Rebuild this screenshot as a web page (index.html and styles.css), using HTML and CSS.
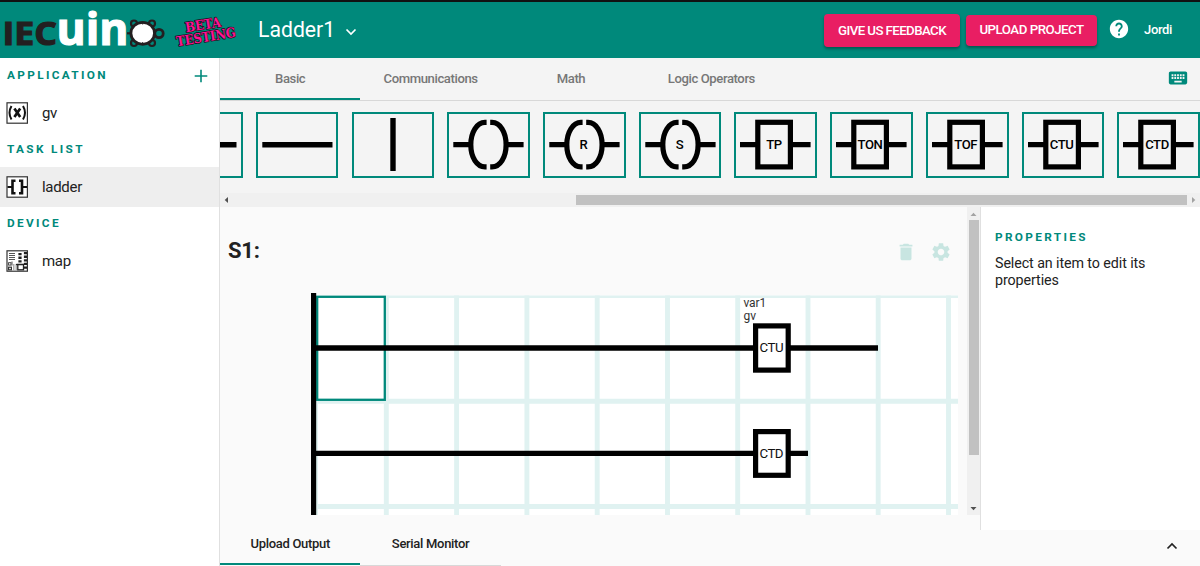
FILE: index.html
```html
<!DOCTYPE html>
<html lang="en">
<head>
    <meta charset="UTF-8">
    <meta name="viewport" content="width=device-width, initial-scale=1.0">
    <title>IECuino</title>
    <link rel="stylesheet" href="styles.css">
</head>
<body>
    <!-- shared ladder symbols -->
    <svg class="defs" width="0" height="0">
        <defs>
            <g id="coil" fill="none" stroke="#000" stroke-width="5.2">
                <path d="M6.3 32.7H23M60 32.7H76.6" />
                <path d="M39.6 10.4H38C30 10.4 23.8 20 23.8 32.7S30 54.900 38 54.900H39.600" />
                <path d="M43.2 10.4H45C53 10.4 59.1 20 59.1 32.7S53 54.900 45 54.900H43.200" />
            </g>
            <g id="block" fill="none" stroke="#000" stroke-width="5.2">
                <path d="M6 32.7H22M58 32.7H76.6" />
                <rect x="23.8" y="10.3" width="32.6" height="44.6" />
            </g>
        </defs>
    </svg>

    <header class="header">
        <svg class="logo" width="240" height="56" viewBox="0 2 240 56">
            <text class="logo-iec" x="2.5" y="45.3" textLength="54.5" lengthAdjust="spacingAndGlyphs">IEC</text>
            <text class="logo-uin" x="56.5" y="45.3" textLength="72" lengthAdjust="spacingAndGlyphs">uin</text>
            <g fill="none" stroke="#231f20" stroke-width="2.2">
                <circle cx="134" cy="23.5" r="3" />
                <circle cx="152" cy="23.5" r="3" />
                <circle cx="134" cy="43" r="3" />
                <circle cx="152" cy="43" r="3" />
                <circle cx="159" cy="33.5" r="4.2" stroke-width="2.8" />
                <path d="M127 33.3h4" />
                <ellipse cx="142.7" cy="33.3" rx="11.8" ry="11" fill="#fff" stroke-width="2.8" />
                <path d="M142.7 22v2.5M142.7 42v2.5" stroke-width="1" />
            </g>
            <g class="beta" transform="rotate(-9 206 31)">
                <text x="186" y="29" textLength="36" lengthAdjust="spacingAndGlyphs">BETA</text>
                <text x="175" y="41.5" textLength="60" lengthAdjust="spacingAndGlyphs">TESTING</text>
            </g>
        </svg>
        <div class="project">
            <span>Ladder1</span>
            <svg width="12" height="8" viewBox="0 0 12 8"><path d="M1.5 1.5L6 6l4.5-4.5" fill="none" stroke="#fff" stroke-width="1.7" /></svg>
        </div>
        <div class="actions">
            <button class="btn btn-feedback">GIVE US FEEDBACK</button>
            <button class="btn btn-upload">UPLOAD PROJECT</button>
            <svg class="help" width="22" height="22" viewBox="0 0 24 24"><path fill="#fff" d="M12 2C6.480 2 2 6.480 2 12s4.480 10 10 10 10-4.480 10-10S17.520 2 12 2zm1 17h-2v-2h2v2zm2.070-7.750l-.9.920C13.450 12.900 13 13.500 13 15h-2v-.5c0-1.100.45-2.100 1.170-2.830l1.240-1.260c.37-.36.59-.86.59-1.410 0-1.100-.9-2-2-2s-2 .9-2 2H8c0-2.210 1.790-4 4-4s4 1.790 4 4c0 .88-.36 1.680-.93 2.250z" /></svg>
            <span class="user">Jordi</span>
        </div>
    </header>

    <div class="page">
        <nav class="sidebar">
            <div class="side-title first">APPLICATION
                <svg class="plus" width="14" height="14" viewBox="0 0 14 14"><path d="M7 .7v12.6M.7 7h12.6" stroke="#00897b" stroke-width="1.6" /></svg>
            </div>
            <div class="side-item">
                <svg width="22" height="22" viewBox="0 0 22 22">
                    <rect x="1" y=".8" width="20.4" height="20.4" fill="#fff" stroke="#333" stroke-width="1.2" />
                    <path d="M5.500 4Q1.500 10.800 5.500 17.500M17 4Q21 10.800 17 17.500" fill="none" stroke="#111" stroke-width="2" />
                    <path d="M8.400 6.500l5.800 8.500M14.200 6.500L8.400 15" stroke="#111" stroke-width="2.7" />
                </svg>
                <span>gv</span>
            </div>
            <div class="side-title">TASK LIST</div>
            <div class="side-item selected">
                <svg width="22" height="22" viewBox="0 0 22 22">
                    <rect x="1" y=".8" width="20.4" height="20.4" fill="#fff" stroke="#333" stroke-width="1.2" />
                    <path d="M9.500 4.800H6.500V17.200H9.500M13 4.800H16V17.200H13" fill="none" stroke="#111" stroke-width="2.6" />
                    <path d="M1.500 11h5M16 11h5" stroke="#111" stroke-width="2.2" />
                </svg>
                <span>ladder</span>
            </div>
            <div class="side-title">DEVICE</div>
            <div class="side-item">
                <svg width="22" height="22" viewBox="0 0 22 22">
                    <rect x="1" y=".8" width="20.4" height="20.4" fill="#fff" stroke="#333" stroke-width="1.2" />
                    <path d="M3 3.500h6M3 5.500h6M3 7.500h6M3 9.500h6" stroke="#555" />
                    <path d="M14 3v10M19.500 2v18" stroke="#222" stroke-width="3.200" stroke-dasharray="2.300 1.300" />
                    <path d="M7.500 14v6M9 14v6M10.500 14v6" stroke="#999" stroke-width=".8" />
                    <rect x="11.8" y="14.5" width="5.7" height="5.3" fill="#fff" stroke="#222" stroke-width="1.3" />
                    <path d="M10 14.500h8" stroke="#222" stroke-width="1.3" />
                    <rect x="2.6" y="12.7" width="2.4" height="2.4" fill="none" stroke="#333" stroke-width=".9" />
                    <rect x="2.6" y="17.2" width="2.8" height="2.6" fill="none" stroke="#333" stroke-width="1.2" />
                    <path d="M6 11.500v4" stroke="#555" />
                </svg>
                <span>map</span>
            </div>
        </nav>

        <main class="content">
            <div class="tabs">
                <div class="tab active">Basic</div>
                <div class="tab">Communications</div>
                <div class="tab">Math</div>
                <div class="tab">Logic Operators</div>
                <svg class="keyboard" width="22" height="22" viewBox="0 0 24 24"><path fill="#00897b" d="M20 5H4c-1.100 0-1.990.9-1.990 2L2 17c0 1.100.9 2 2 2h16c1.100 0 2-.9 2-2V7c0-1.100-.9-2-2-2zm-9 3h2v2h-2V8zm0 3h2v2h-2v-2zM8 8h2v2H8V8zm0 3h2v2H8v-2zm-1 2H5v-2h2v2zm0-3H5V8h2v2zm9 7H8v-2h8v2zm0-4h-2v-2h2v2zm0-3h-2V8h2v2zm3 3h-2v-2h2v2zm0-3h-2V8h2v2z" /></svg>
            </div>

            <div class="palette">
                <div class="tool"><svg viewBox="0 0 82.6 65.4"><path d="M6.3 32.7H76.5" stroke="#000" stroke-width="5.4" /></svg></div>
                <div class="tool"><svg viewBox="0 0 82.6 65.4"><path d="M6.3 32.7H76.5" stroke="#000" stroke-width="5.4" /></svg></div>
                <div class="tool"><svg viewBox="0 0 82.6 65.4"><path d="M41 6V59" stroke="#000" stroke-width="5.4" /></svg></div>
                <div class="tool"><svg viewBox="0 0 82.6 65.4"><use href="#coil" /></svg></div>
                <div class="tool"><svg viewBox="0 0 82.6 65.4"><use href="#coil" /><text x="40.4" y="37.2">R</text></svg></div>
                <div class="tool"><svg viewBox="0 0 82.6 65.4"><use href="#coil" /><text x="40.4" y="37.2">S</text></svg></div>
                <div class="tool"><svg viewBox="0 0 82.6 65.4"><use href="#block" /><text x="40" y="37.2">TP</text></svg></div>
                <div class="tool"><svg viewBox="0 0 82.6 65.4"><use href="#block" /><text x="40" y="37.2">TON</text></svg></div>
                <div class="tool"><svg viewBox="0 0 82.6 65.4"><use href="#block" /><text x="39.7" y="37.2">TOF</text></svg></div>
                <div class="tool"><svg viewBox="0 0 82.6 65.4"><use href="#block" /><text x="39.7" y="37.2">CTU</text></svg></div>
                <div class="tool"><svg viewBox="0 0 82.6 65.4"><use href="#block" /><text x="40" y="37.2">CTD</text></svg></div>
            </div>
            <div class="hscroll">
                <svg width="14" height="14" viewBox="0 0 14 14"><path d="M8 4v6L4.7 7z" fill="#505050" /></svg>
                <div class="hthumb"></div>
                <svg width="13" height="14" viewBox="0 0 13 14"><path d="M5 4v6l3.3-3z" fill="#a3a3a3" /></svg>
            </div>

            <div class="workspace">
                <section class="editor">
                    <div class="section-head">
                        <h2>S1:</h2>
                        <div class="section-tools">
                            <svg width="22" height="22" viewBox="0 0 24 24"><path d="M6 19c0 1.100.9 2 2 2h8c1.100 0 2-.9 2-2V7H6v12zM19 4h-3.500l-1-1h-5l-1 1H5v2h14V4z" /></svg>
                            <svg width="22" height="22" viewBox="0 0 24 24"><path d="M19.140 12.940c.04-.3.06-.61.06-.94 0-.32-.02-.64-.07-.94l2.030-1.580c.18-.14.23-.41.12-.61l-1.920-3.320c-.12-.22-.37-.29-.59-.22l-2.390.96c-.5-.38-1.030-.7-1.620-.94l-.36-2.540c-.04-.24-.24-.41-.48-.41h-3.840c-.24 0-.43.17-.47.41l-.36 2.540c-.59.24-1.130.57-1.620.94l-2.390-.96c-.22-.08-.47 0-.59.22L2.740 8.870c-.12.21-.08.47.12.61l2.030 1.580c-.05.3-.09.63-.09.94s.02.64.07.94l-2.030 1.580c-.18.14-.23.41-.12.61l1.920 3.320c.12.22.37.29.59.22l2.390-.96c.5.38 1.030.7 1.620.94l.36 2.540c.05.24.24.41.48.41h3.840c.24 0 .44-.17.47-.41l.36-2.540c.59-.24 1.130-.56 1.620-.94l2.390.96c.22.08.47 0 .59-.22l1.920-3.320c.12-.22.07-.47-.12-.61l-2.010-1.580zM12 15.600c-1.980 0-3.600-1.620-3.600-3.600s1.620-3.600 3.600-3.600 3.600 1.620 3.600 3.600-1.620 3.600-3.600 3.600z" /></svg>
                        </div>
                    </div>
                    <svg class="ladder" width="648" height="222" viewBox="310 293 648 222">
                        <rect x="316" y="295.6" width="642" height="219.4" fill="#fff" />
                        <!-- grid -->
                        <g fill="none" stroke="#e0f2f1">
                            <path stroke-width="2.4" d="M316 296.8H958" />
                            <path stroke-width="4.9" d="M316 401.2H958M316 506.5H958" />
                            <path stroke-width="4.9" d="M386.3 295.6V515M456.6 295.6V515M526.9 295.6V515M597.2 295.6V515M667.5 295.6V515M737.7 295.6V515M808 295.6V515M878.2 295.6V515M948.5 295.6V515" />
                            <path stroke-width="2" d="M317 402V515" />
                        </g>
                        <rect x="317.2" y="296.8" width="67.6" height="103" fill="none" stroke="#00897b" stroke-width="2.3" />
                        <path d="M313.6 293V515" stroke="#000" stroke-width="5.2" />
                        <path d="M316 348H755M789 348H878M316 453.4H755M789 453.4H808" stroke="#000" stroke-width="5.3" />
                        <rect x="755.6" y="325.9" width="32.6" height="44.2" fill="#fff" stroke="#000" stroke-width="5.2" />
                        <rect x="755.6" y="431.6" width="32.6" height="43.7" fill="#fff" stroke="#000" stroke-width="5.2" />
                        <text class="block-name" x="771.3" y="352.4">CTU</text>
                        <text class="block-name" x="771.3" y="458">CTD</text>
                        <text class="var-name" x="743.5" y="307">var1</text>
                        <text class="var-name" x="743.5" y="320">gv</text>
                    </svg>
                </section>
                <div class="vscroll">
                    <svg width="13" height="13" viewBox="0 0 13 13"><path d="M3.500 9h6L6.500 5.700z" fill="#a3a3a3" /></svg>
                    <div class="vthumb"></div>
                    <svg width="13" height="13" viewBox="0 0 13 13"><path d="M3.500 5h6L6.500 8.300z" fill="#505050" /></svg>
                </div>
                <aside class="properties">
                    <h3>PROPERTIES</h3>
                    <p>Select an item to edit its properties</p>
                </aside>
            </div>

            <div class="console">
                <div class="console-tab active">Upload Output</div>
                <div class="console-tab">Serial Monitor</div>
                <svg class="expand" width="12" height="8" viewBox="0 0 12 8"><path d="M1.500 6.500L6 2l4.500 4.500" fill="none" stroke="#222" stroke-width="1.7" /></svg>
            </div>
        </main>
    </div>
</body>
</html>
```
FILE: styles.css
```css
* {
    box-sizing: border-box;
}

body {
    margin: 0;
    height: 566px;
    overflow: hidden;
    display: flex;
    flex-direction: column;
    font-family: Roboto, sans-serif;
    color: #222;
    background-color: #fafafa;
}

svg {
    display: block;
    flex-shrink: 0;
}

.defs {
    position: absolute;
}

/* Header */
.header {
    height: 58px;
    flex-shrink: 0;
    display: flex;
    align-items: center;
    background-color: #00897b;
    border-top: 2px solid #111;
    color: #fff;
}

.logo {
    overflow: visible;
}

.logo text {
    font-family: "Open Sans", sans-serif;
    font-weight: 700;
}

.logo .logo-iec {
    font-size: 33px;
    fill: #231f20;
    stroke: #231f20;
    stroke-width: 1.2px;
}

.logo .logo-uin {
    font-size: 44.5px;
    fill: #fff;
    stroke: #fff;
    stroke-width: 1.2px;
}

.logo .beta text {
    font-family: "DejaVu Serif", serif;
    font-weight: 700;
    font-size: 13.5px;
    fill: #ff1493;
    stroke: #1d1020;
    stroke-width: 1.6px;
    stroke-linejoin: round;
    paint-order: stroke;
}

.project {
    display: flex;
    align-items: center;
    gap: 10px;
    margin-left: 18px;
    font-size: 21.2px;
}

.project span {
    margin-top: -2px;
}

.project svg {
    margin-top: 4px;
}

.actions {
    display: flex;
    align-items: center;
    margin-left: auto;
    padding-right: 28px;
}

.btn {
    padding: 0;
    border: none;
    border-radius: 4px;
    background-color: #e91e63;
    box-shadow: 0 2px 3px rgba(0, 0, 0, 0.35);
    color: #fff;
    font-family: inherit;
    font-size: 13.3px;
    font-weight: 500;
    letter-spacing: -0.6px;
}

.btn-feedback {
    width: 136px;
    height: 33px;
    margin-right: 6px;
}

.btn-upload {
    width: 131px;
    height: 31px;
    padding-bottom: 2px;
    letter-spacing: -0.5px;
}

.help {
    margin: 0 14px 2px 11px;
}

.user {
    margin-top: -2px;
    font-size: 13px;
    font-weight: 500;
    letter-spacing: -0.35px;
}

.page {
    display: flex;
    flex: 1;
    min-height: 0;
}

/* Sidebar */
.sidebar {
    width: 220px;
    flex-shrink: 0;
    background-color: #fff;
    border-right: 1px solid #e0e0e0;
}

.side-title {
    height: 34px;
    display: flex;
    align-items: center;
    justify-content: space-between;
    padding: 0 11px 2px 7px;
    color: #00897b;
    font-size: 11.8px;
    font-weight: 700;
    letter-spacing: 2.35px;
}

.side-title.first {
    height: 35px;
    padding-bottom: 1px;
}

.plus {
    margin-top: 2px;
}

.side-item {
    height: 40px;
    display: flex;
    align-items: center;
    gap: 14px;
    padding-left: 6px;
    font-size: 15px;
    letter-spacing: -0.3px;
}

.side-item.selected {
    background-color: #eee;
}

/* Tabs and palette */
.content {
    flex: 1;
    min-width: 0;
    display: flex;
    flex-direction: column;
}

.tabs {
    height: 43px;
    display: flex;
    background-color: #f4f4f4;
    border-bottom: 1px solid #d8d8d8;
}

.tab {
    width: 140.4px;
    height: 42px;
    line-height: 42px;
    text-align: center;
    font-size: 13.1px;
    font-weight: 500;
    letter-spacing: -0.4px;
    color: #777;
}

.tab.active {
    border-bottom: 2px solid #00897b;
}

.keyboard {
    margin: 9px 11px 0 auto;
}

.palette {
    height: 92px;
    display: flex;
    justify-content: flex-end;
    gap: 13.15px;
    padding-top: 11.4px;
    overflow: hidden;
    background-color: #f4f4f4;
}

.tool {
    width: 82.6px;
    height: 65.4px;
    flex-shrink: 0;
    outline: 2px solid #00897b;
    outline-offset: -2px;
}

.tool svg {
    width: 82.6px;
    height: 65.4px;
}

.tool text {
    font-size: 13.1px;
    font-weight: 500;
    letter-spacing: -0.4px;
    text-anchor: middle;
    fill: #000;
}

.hscroll {
    height: 14px;
    display: flex;
    align-items: center;
    justify-content: space-between;
    background-color: #f0f0f0;
}

.hthumb {
    width: 611px;
    height: 10px;
    margin-left: auto;
    background-color: #c1c1c1;
}

/* Ladder editor */
.workspace {
    height: 323px;
    display: flex;
}

.editor {
    width: 747px;
    height: 308px;
    overflow: hidden;
}

.section-head {
    height: 86px;
    display: flex;
    justify-content: space-between;
    padding: 0 15px 0 8px;
}

.section-head h2 {
    margin: 31px 0 0;
    font-size: 22px;
    line-height: 26px;
    font-weight: 700;
    letter-spacing: -0.2px;
}

.section-tools {
    display: flex;
    gap: 13px;
    padding-top: 34px;
    fill: #c8e5e1;
}

.ladder {
    margin-left: 90px;
}

.ladder .block-name {
    font-size: 13.3px;
    letter-spacing: -0.5px;
    text-anchor: middle;
    fill: #111;
}

.ladder .var-name {
    font-size: 12px;
    letter-spacing: -0.1px;
    fill: #333;
}

.vscroll {
    width: 13px;
    height: 308px;
    background-color: #f0f0f0;
}

.vthumb {
    width: 10px;
    height: 235px;
    margin: 0 1px 47px 2px;
    background-color: #c1c1c1;
}

.properties {
    flex: 1;
    padding: 23px 14px;
    background-color: #fff;
    border-left: 1px solid #e0e0e0;
}

.properties h3 {
    margin: 0;
    color: #00897b;
    font-size: 11.8px;
    line-height: 14px;
    letter-spacing: 2.35px;
}

.properties p {
    width: 170px;
    margin: 11px 0 0;
    font-size: 14.3px;
    line-height: 17px;
    letter-spacing: -0.1px;
}

/* Bottom console */
.console {
    height: 36px;
    display: flex;
}

.console-tab {
    width: 140.4px;
    height: 36px;
    line-height: 28px;
    text-align: center;
    font-size: 13px;
    font-weight: 500;
    letter-spacing: -0.3px;
    border-bottom: 1px solid #d8d8d8;
}

.console-tab.active {
    height: 35px;
    border-bottom: 2px solid #00897b;
}

.expand {
    margin: 12px 22px 0 auto;
}
```
